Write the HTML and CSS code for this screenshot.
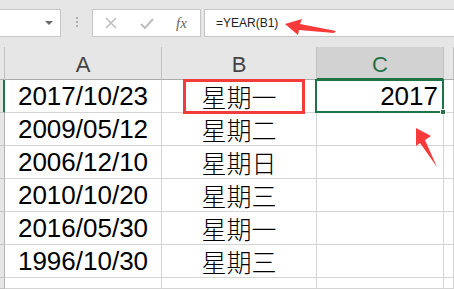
FILE: index.html
```html
<!DOCTYPE html>
<html lang="zh-CN">
<head>
    <meta charset="UTF-8">
    <title>YEAR</title>
    <link rel="stylesheet" href="styles.css">
</head>
<body>
    <div class="toolbar">
        <div class="namebox"><span class="caret"></span></div>
        <div class="grip"><i></i><i></i><i></i></div>
        <div class="fx-buttons">
            <svg width="12" height="12" viewBox="0 0 12 12"><path d="M1 1 L11 11 M11 1 L1 11" stroke="#bdbdbd" stroke-width="1.6" fill="none"/></svg>
            <svg width="14" height="11" viewBox="0 0 14 11"><path d="M1 6 L5 10 L13 1" stroke="#bdbdbd" stroke-width="2" fill="none"/></svg>
            <span class="fx">fx</span>
        </div>
        <div class="formula">=YEAR(B1)</div>
    </div>

    <div class="sheet">
        <div class="corner"></div>
        <div class="col-head">A</div>
        <div class="col-head">B</div>
        <div class="col-head active">C</div>
        <div class="col-head"></div>

        <div class="row-head active"></div>
        <div class="cell">2017/10/23</div>
        <div class="cell cjk marked">星期一</div>
        <div class="cell num selected">2017</div>
        <div class="cell"></div>

        <div class="row-head"></div>
        <div class="cell">2009/05/12</div>
        <div class="cell cjk">星期二</div>
        <div class="cell"></div>
        <div class="cell"></div>

        <div class="row-head"></div>
        <div class="cell">2006/12/10</div>
        <div class="cell cjk">星期日</div>
        <div class="cell"></div>
        <div class="cell"></div>

        <div class="row-head"></div>
        <div class="cell">2010/10/20</div>
        <div class="cell cjk">星期三</div>
        <div class="cell"></div>
        <div class="cell"></div>

        <div class="row-head"></div>
        <div class="cell">2016/05/30</div>
        <div class="cell cjk">星期一</div>
        <div class="cell"></div>
        <div class="cell"></div>

        <div class="row-head"></div>
        <div class="cell">1996/10/30</div>
        <div class="cell cjk">星期三</div>
        <div class="cell"></div>
        <div class="cell"></div>

        <div class="row-head"></div>
        <div class="cell"></div>
        <div class="cell"></div>
        <div class="cell"></div>
        <div class="cell"></div>
    </div>

    <!-- annotation arrows drawn over the sheet -->
    <svg class="marks" width="454" height="289" viewBox="0 0 454 289">
        <polygon points="285,24 302,19 300,24 336,31 334,33 299,30 298,35" fill="#f83a3a"/>
        <polygon points="416,128 431,136 425,140 437,167 420,143 416,146" fill="#f83a3a"/>
    </svg>
</body>
</html>
```

FILE: styles.css
```css
body {
    margin: 0;
    width: 454px;
    height: 289px;
    overflow: hidden;
    background-color: #e6e6e6;
    font-family: "Liberation Sans", Arial, sans-serif;
    position: relative;
}
.toolbar {
    display: flex;
    align-items: flex-start;
    padding-top: 9px;
    height: 28px;
}
.namebox,
.fx-buttons,
.formula {
    box-sizing: border-box;
    height: 28px;
    background-color: white;
    border: 1px solid #c6c6c6;
}
.namebox {
    width: 62px;
    margin-left: -1px;
    display: flex;
    align-items: center;
    justify-content: flex-end;
    padding-right: 7px;
}
.caret {
    width: 0;
    height: 0;
    border-left: 4px solid transparent;
    border-right: 4px solid transparent;
    border-top: 4px solid #6a6a6a;
}
.grip {
    width: 31px;
    display: flex;
    flex-direction: column;
    align-items: center;
    gap: 2px;
    padding-top: 8px;
}
.grip i {
    width: 2px;
    height: 2px;
    background-color: #b0b0b0;
}
.fx-buttons {
    width: 109px;
    display: flex;
    align-items: center;
    padding-left: 12px;
    gap: 23px;
}
.fx {
    font-family: "Liberation Serif", serif;
    font-style: italic;
    font-size: 15px;
    color: #666;
    margin-left: -1px;
}
.formula {
    flex: 1;
    margin-left: 3px;
    margin-right: -2px;
    padding-left: 11px;
    font-size: 12px;
    line-height: 26px;
    color: #222;
}
.sheet {
    margin-top: 10px;
    height: 242px;
    overflow: hidden;
    display: grid;
    grid-template-columns: 5px 157px 155px 127px 1fr;
    grid-template-rows: repeat(7, 33px) 11px;
    background-color: white;
}
.sheet > div {
    box-sizing: border-box;
    border-right: 1px solid #d4d4d4;
    border-bottom: 1px solid #d4d4d4;
    position: relative;
}
.corner,
.col-head,
.row-head {
    background-color: #e6e6e6;
}
.sheet > .col-head,
.sheet > .corner {
    border-right-color: #c2c2c2;
    border-bottom-color: #ababab;
    font-size: 22px;
    color: #444;
    text-align: center;
    line-height: 35px;
}
.sheet > .col-head.active {
    background-color: #d2d2d2;
    color: #217346;
    border-bottom: 2px solid #217346;
}
.sheet > .row-head {
    border-right-color: #b4b4b4;
    border-bottom-color: #c4c4c4;
}
.sheet > .row-head.active {
    border-right-color: #217346;
    box-shadow: inset -1px 0 #217346;
}
.cell {
    font-size: 26px;
    line-height: 32px;
    text-align: center;
    color: #000;
}
.cjk {
    font-family: "Noto Sans CJK SC", sans-serif;
    font-size: 25px;
    font-weight: 300;
}
.num {
    text-align: right;
    padding-right: 5px;
}
.selected::after {
    content: "";
    position: absolute;
    top: -1px;
    left: -2px;
    right: -1px;
    bottom: -1px;
    border: 2px solid #217346;
}
.selected::before {
    content: "";
    position: absolute;
    right: -3px;
    bottom: -3px;
    width: 6px;
    height: 6px;
    background-color: #217346;
    border: 1px solid white;
    box-sizing: border-box;
    z-index: 1;
}
.marked::after {
    content: "";
    position: absolute;
    top: -1px;
    left: 21px;
    right: 11px;
    bottom: -2px;
    border: 3px solid #f23b3b;
}
.marks {
    position: absolute;
    top: 0;
    left: 0;
    pointer-events: none;
}
```
